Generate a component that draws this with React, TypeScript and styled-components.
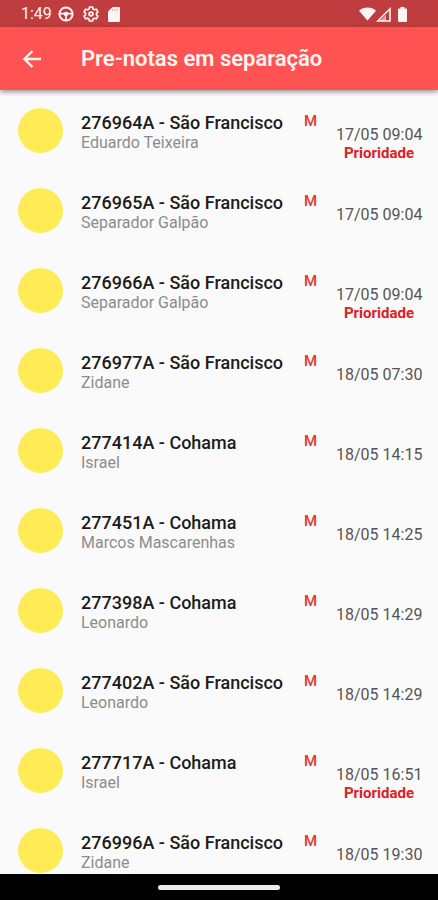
import React from "react";
import styled, { createGlobalStyle } from "styled-components";

const GlobalStyle = createGlobalStyle`
  * { box-sizing: border-box; }
  html, body { margin: 0; padding: 0; }
  body {
    background: #fafafa;
    font-family: Roboto, "Liberation Sans", sans-serif;
  }
`;

const Screen = styled.div`
  display: flex;
  flex-direction: column;
  height: 100vh;
  overflow: hidden;
  background: #fafafa;
`;

const StatusBar = styled.div`
  display: flex;
  flex: none;
  align-items: center;
  justify-content: space-between;
  height: 27px;
  padding: 1px 31px 0 21px;
  background: #bf3d3e;
  color: #fff5f3;
`;

const StatusGroup = styled.div<{ $gap: number }>`
  display: flex;
  align-items: center;
  gap: ${({ $gap }) => $gap}px;

  svg {
    display: block;
  }
`;

const Clock = styled.span`
  font-size: 16px;
  line-height: 20px;
`;

const AppBar = styled.header`
  position: relative;
  display: flex;
  flex: none;
  align-items: center;
  gap: 35px;
  height: 63px;
  padding: 0 18px;
  background: #ff5252;
  color: #fff5f3;
  box-shadow: 0 2px 5px rgba(0, 0, 0, 0.4);
`;

const BackButton = styled.button`
  display: flex;
  align-items: center;
  justify-content: center;
  width: 28px;
  height: 40px;
  padding: 0;
  border: 0;
  background: none;
  color: inherit;
  cursor: pointer;
`;

const PageTitle = styled.h1`
  margin: 0;
  font-size: 22px;
  line-height: 28px;
  font-weight: 600;
  white-space: nowrap;
`;

const NoteList = styled.ul`
  flex: 1;
  min-height: 0;
  margin: 0;
  padding: 0;
  list-style: none;
  overflow-y: auto;
  scrollbar-width: none;
`;

const NoteRow = styled.li`
  display: flex;
  align-items: flex-start;
  min-height: 80px;
  padding: 18px 16px 0 18px;
`;

const Avatar = styled.span`
  flex: none;
  width: 45px;
  height: 45px;
  margin-right: 18px;
  border-radius: 50%;
  background: #ffeb55;
`;

const NoteText = styled.div`
  flex: 1;
  min-width: 0;
  padding-top: 5px;
  white-space: nowrap;
`;

const NoteTitle = styled.div`
  font-size: 18px;
  line-height: 20px;
  font-weight: 500;
  color: #1c1c1c;
`;

const NotePerson = styled.div`
  font-size: 16px;
  line-height: 20px;
  color: #8c8c8c;
`;

const Marker = styled.span`
  flex: none;
  padding-top: 4px;
  margin-right: 19px;
  font-size: 15px;
  line-height: 18px;
  font-weight: 500;
  color: #f03030;
`;

const Trailing = styled.div`
  flex: none;
  width: 86px;
  padding-top: 18px;
  font-size: 15px;
  line-height: 18px;
  text-align: center;
  white-space: nowrap;
`;

const NoteTime = styled.time`
  display: block;
  font-size: 16px;
  color: #555555;
`;

const Priority = styled.strong`
  display: block;
  font-weight: 700;
  color: #e02020;
`;

const NavigationBar = styled.div`
  display: flex;
  flex: none;
  align-items: center;
  justify-content: center;
  height: 26px;
  background: #000;
`;

const HomeHandle = styled.span`
  width: 122px;
  height: 5px;
  border-radius: 3px;
  background: #ececec;
`;

const WheelIcon = () => (
  <svg width="16" height="16" viewBox="0 0 16 16" fill="none" stroke="currentColor" aria-hidden="true">
    <circle cx="8" cy="8" r="6.6" strokeWidth="2" />
    <path d="M2 7.6h12M8 8v6" strokeWidth="1.7" />
    <circle cx="8" cy="8" r="2.2" fill="currentColor" stroke="none" />
  </svg>
);

const GearIcon = () => (
  <svg width="16" height="16" viewBox="0 0 16 16" fill="none" stroke="currentColor" aria-hidden="true">
    <path
      d="M6.5 1h3l.5 2 1.4.8 2-.6 1.5 2.6L13.5 7.2v1.6l1.4 1.4-1.5 2.6-2-.6-1.4.8-.5 2h-3L6 13l-1.4-.8-2 .6-1.5-2.6L2.5 8.8V7.2L1.1 5.8l1.5-2.6 2 .6L6 3z"
      strokeWidth="1.7"
      strokeLinejoin="round"
    />
    <circle cx="8" cy="8" r="1.9" strokeWidth="1.8" />
  </svg>
);

const CardIcon = () => (
  <svg width="12" height="15" viewBox="0 0 12 15" fill="currentColor" aria-hidden="true">
    <path d="M4.5 0H11a1 1 0 0 1 1 1v13a1 1 0 0 1-1 1H1a1 1 0 0 1-1-1V4.5z" />
    <path d="M4.5 2v2M6.8 2v2M9 2v2" stroke="#e8a8a6" strokeWidth="1" />
  </svg>
);

const WifiIcon = () => (
  <svg width="17" height="14" viewBox="0 0 18 14" fill="currentColor" aria-hidden="true">
    <path d="M0 3.5C5-1 13-1 18 3.5L9 14z" />
  </svg>
);

const SignalIcon = () => (
  <svg width="15" height="15" viewBox="0 0 15 15" aria-hidden="true">
    <path d="M1.8 14H14V1.8z" fill="none" stroke="currentColor" strokeWidth="1.6" />
    <path d="M4 14 10 8v6z" fill="currentColor" opacity=".6" />
  </svg>
);

const BatteryIcon = () => (
  <svg width="9" height="15" viewBox="0 0 9 15" fill="currentColor" aria-hidden="true">
    <path d="M2.5 0h4v1.5H8a1 1 0 0 1 1 1V14a1 1 0 0 1-1 1H1a1 1 0 0 1-1-1V2.5a1 1 0 0 1 1-1h1.5z" />
  </svg>
);

const BackIcon = () => (
  <svg width="18" height="18" viewBox="0 0 18 18" fill="none" stroke="currentColor" strokeWidth="2.3" aria-hidden="true">
    <path d="M18 9H2M9.5 1 1.5 9l8 8" />
  </svg>
);

interface Note {
  code: string;
  place: string;
  person: string;
  time: string;
  priority?: boolean;
}

const notes: Note[] = [
  { code: "276964A", place: "São Francisco", person: "Eduardo Teixeira", time: "17/05 09:04", priority: true },
  { code: "276965A", place: "São Francisco", person: "Separador Galpão", time: "17/05 09:04" },
  { code: "276966A", place: "São Francisco", person: "Separador Galpão", time: "17/05 09:04", priority: true },
  { code: "276977A", place: "São Francisco", person: "Zidane", time: "18/05 07:30" },
  { code: "277414A", place: "Cohama", person: "Israel", time: "18/05 14:15" },
  { code: "277451A", place: "Cohama", person: "Marcos Mascarenhas", time: "18/05 14:25" },
  { code: "277398A", place: "Cohama", person: "Leonardo", time: "18/05 14:29" },
  { code: "277402A", place: "São Francisco", person: "Leonardo", time: "18/05 14:29" },
  { code: "277717A", place: "Cohama", person: "Israel", time: "18/05 16:51", priority: true },
  { code: "276996A", place: "São Francisco", person: "Zidane", time: "18/05 19:30" },
];

export default function App() {
  return (
    <Screen>
      <GlobalStyle />
      <StatusBar>
        <StatusGroup $gap={6}>
          <Clock>1:49</Clock>
          <StatusGroup $gap={9}>
            <WheelIcon />
            <GearIcon />
            <CardIcon />
          </StatusGroup>
        </StatusGroup>
        <StatusGroup $gap={7}>
          <StatusGroup $gap={0}>
            <WifiIcon />
            <SignalIcon />
          </StatusGroup>
          <BatteryIcon />
        </StatusGroup>
      </StatusBar>
      <AppBar>
        <BackButton type="button" aria-label="Voltar">
          <BackIcon />
        </BackButton>
        <PageTitle>Pre-notas em separação</PageTitle>
      </AppBar>
      <NoteList>
        {notes.map((note) => (
          <NoteRow key={note.code}>
            <Avatar />
            <NoteText>
              <NoteTitle>
                {note.code} - {note.place}
              </NoteTitle>
              <NotePerson>{note.person}</NotePerson>
            </NoteText>
            <Marker>M</Marker>
            <Trailing>
              <NoteTime>{note.time}</NoteTime>
              {note.priority && <Priority>Prioridade</Priority>}
            </Trailing>
          </NoteRow>
        ))}
      </NoteList>
      <NavigationBar>
        <HomeHandle />
      </NavigationBar>
    </Screen>
  );
}
